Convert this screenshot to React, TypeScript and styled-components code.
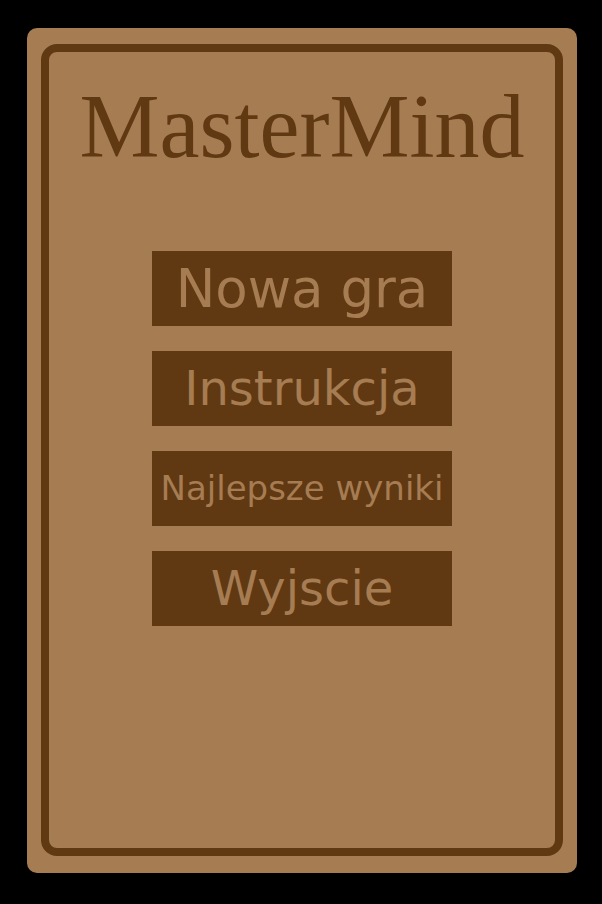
import React from "react";
import styled, { createGlobalStyle } from "styled-components";

const GlobalStyle = createGlobalStyle`
  html, body {
    margin: 0;
    padding: 0;
    background: #000;
  }
  #root {
    width: 602px;
    height: 904px;
  }
`;

const Page = styled.div`
  width: 602px;
  height: 904px;
  background: #000;
  padding: 28px 25px 31px 27px;
  box-sizing: border-box;
  display: flex;
`;

const Card = styled.div`
  flex: 1;
  background: #a67c52;
  border-radius: 10px;
  padding: 16px 14px 17px 14px;
  box-sizing: border-box;
  display: flex;
`;

const Frame = styled.div`
  flex: 1;
  border: 8px solid #603913;
  border-radius: 16px;
  display: flex;
  flex-direction: column;
  align-items: center;
  box-sizing: border-box;
`;

const Title = styled.h1`
  margin: 30px 0 0 0;
  font-family: "Liberation Serif", "Times New Roman", serif;
  font-weight: normal;
  font-size: 90px;
  line-height: 90px;
  color: #603913;
  white-space: nowrap;
`;

const Menu = styled.nav`
  margin-top: 79px;
  display: flex;
  flex-direction: column;
  gap: 25px;
`;

const MenuButton = styled.button<{ $size: number }>`
  width: 300px;
  height: 75px;
  border: none;
  padding: 0;
  margin: 0;
  background: #603913;
  color: #a67c52;
  font-family: "DejaVu Sans", sans-serif;
  font-size: ${(p) => p.$size}px;
  line-height: 75px;
  white-space: nowrap;
  cursor: pointer;
  display: flex;
  align-items: center;
  justify-content: center;
`;

const items: { label: string; size: number }[] = [
  { label: "Nowa gra", size: 53 },
  { label: "Instrukcja", size: 48 },
  { label: "Najlepsze wyniki", size: 34 },
  { label: "Wyjscie", size: 48 },
];

export default function App() {
  return (
    <>
      <GlobalStyle />
      <Page>
        <Card>
          <Frame>
            <Title>MasterMind</Title>
            <Menu>
              {items.map((it) => (
                <MenuButton key={it.label} $size={it.size}>
                  {it.label}
                </MenuButton>
              ))}
            </Menu>
          </Frame>
        </Card>
      </Page>
    </>
  );
}
